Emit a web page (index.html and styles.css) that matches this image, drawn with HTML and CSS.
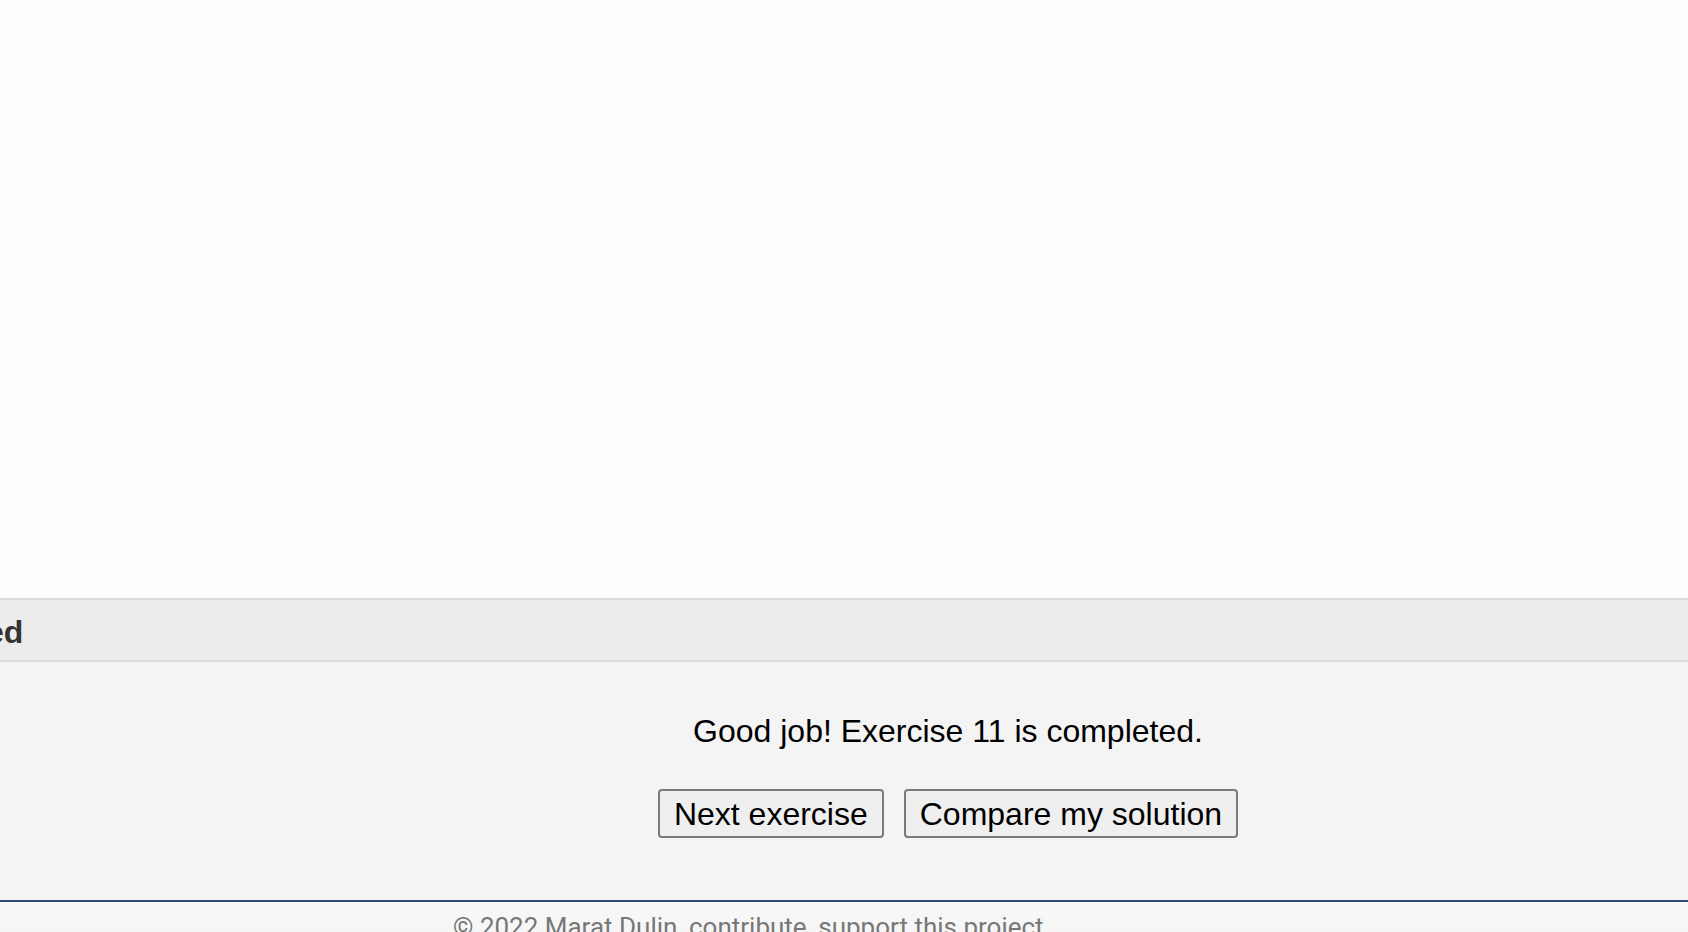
FILE: index.html
```html
<!DOCTYPE html>
<html lang="en">
<head>
<meta charset="utf-8">
<title>Exercise 11</title>
<link rel="stylesheet" href="styles.css">
</head>
<body>
  <main class="page">
    <section class="canvas"></section>
    <section class="result">
      <header class="result-bar">
        <h2 class="result-title">ed</h2>
      </header>
      <div class="result-body">
        <p class="result-message">Good job! Exercise 11 is completed.</p>
        <div class="result-actions">
          <button class="btn" type="button">Next exercise</button>
          <button class="btn" type="button">Compare my solution</button>
        </div>
      </div>
    </section>
    <footer class="footer">
      <p class="footer-text">© 2022 Marat Dulin, <a class="footer-link" href="#">contribute</a>, <a class="footer-link" href="#">support this project</a></p>
    </footer>
  </main>
</body>
</html>
```

FILE: styles.css
```css
html, body {
  margin: 0;
  padding: 0;
  background: #fefefe;
  overflow: hidden;
}

.page {
  display: flex;
  flex-direction: column;
  font-family: "Liberation Sans", Arial, sans-serif;
}

.canvas {
  height: 598px;
  background: #fefefe;
}

.result-bar {
  height: 60px;
  background: #ececed;
  border-top: 2px solid #dcdcdc;
  border-bottom: 2px solid #dcdcdc;
  display: flex;
  align-items: flex-start;
}

.result-title {
  margin: 0 0 0 -14px;
  padding-top: 4px;
  font-size: 32px;
  font-weight: bold;
  line-height: 56px;
  color: #333333;
}

.result-body {
  height: 238px;
  box-sizing: border-box;
  background: #f4f4f5;
  padding: 51px 0 0 208px;
  display: flex;
  flex-direction: column;
  align-items: center;
}

.result-message {
  margin: 0;
  font-size: 32px;
  color: #000;
  line-height: normal;
}

.result-actions {
  display: flex;
  gap: 20px;
  margin-top: 39px;
}

.btn {
  font-family: "Liberation Sans", Arial, sans-serif;
  font-size: 32px;
  line-height: 40px;
  height: 49px;
  padding: 2px 14px;
  box-sizing: border-box;
  border: 2px solid #7a7a7a;
  border-radius: 4px;
  background: #efefef;
  color: #000;
}

.footer {
  border-top: 2px solid #2d4e7d;
  background: linear-gradient(#f8f8f8, #f2f2f2);
  height: 60px;
  padding: 10px 0 0 453px;
}

.footer-text {
  margin: 0;
  font-family: Roboto, "Liberation Sans", sans-serif;
  font-size: 26px;
  color: #777777;
}

.footer-link {
  color: #777777;
  text-decoration: none;
}
```
